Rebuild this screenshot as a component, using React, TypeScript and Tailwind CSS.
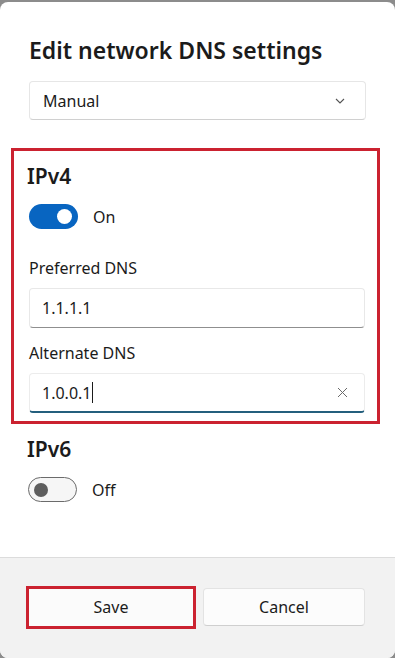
import React from "react";

const font = { fontFamily: '"Noto Sans", "Open Sans", sans-serif' };

function ToggleOn() {
  return (
    <div className="w-[49px] h-[25px] rounded-full bg-[#0865c1] flex items-center justify-end pr-[6px]">
      <div className="w-[15px] h-[15px] rounded-full bg-white" />
    </div>
  );
}

function ToggleOff() {
  return (
    <div className="w-[49px] h-[25px] rounded-full border border-[#6b6b6b] bg-[#f6f6f6] flex items-center pl-[5px]">
      <div className="w-[14px] h-[14px] rounded-full bg-[#5e5e5e]" />
    </div>
  );
}

export default function App() {
  return (
    <div className="w-[395px] h-[658px] bg-[#8c8c8c] pt-[2px] overflow-hidden" style={font}>
      <div className="h-[656px] bg-white rounded-[8px] flex flex-col overflow-hidden">
        <div className="flex-1 flex flex-col">
          <div className="pt-[34px] pl-[29px] text-[23px] leading-[28px] font-semibold text-[#1b1b1b]">
            Edit network DNS settings
          </div>
          <div className="mt-[17px] mx-[29px] w-[337px] h-[39px] rounded-[4px] border border-[#e6e6e6] border-b-[#d0d0d0] bg-white flex items-center justify-between pl-[13px] pr-[20px] text-[16px] text-[#1b1b1b]">
            <span>Manual</span>
            <svg width="10" height="6" viewBox="0 0 10 6" fill="none">
              <polyline points="1,1 5,5 9,1" stroke="#555" strokeWidth="1.1" />
            </svg>
          </div>

          <div className="mt-[28px] ml-[11px] w-[369px] border-[3px] border-[#cb2230] pl-[15px] pr-[12px] pb-[8px]">
            <div className="pt-[11px] text-[21px] leading-[28px] font-semibold text-[#1b1b1b] -ml-[2px]">IPv4</div>
            <div className="mt-[14px] h-[25px] flex items-center gap-[15px]">
              <ToggleOn />
              <span className="text-[16px] text-[#1b1b1b]">On</span>
            </div>
            <div className="mt-[29px] text-[16px] leading-[20px] text-[#1b1b1b]">Preferred DNS</div>
            <div className="mt-[10px] h-[40px] rounded-[4px] border border-[#e8e8e8] border-b-[#8f8f8f] bg-white flex items-center pl-[12px] text-[16px] text-[#1b1b1b]">
              1.1.1.1
            </div>
            <div className="mt-[15px] text-[16px] leading-[20px] text-[#1b1b1b]">Alternate DNS</div>
            <div className="mt-[10px] h-[40px] rounded-[4px] border border-[#ececec] border-b-2 border-b-[#245f7d] bg-white flex items-center justify-between pl-[12px] pr-[16px] text-[16px] text-[#1b1b1b]">
              <span className="flex items-center">
                1.0.0.1
                <span className="inline-block w-[1px] h-[21px] bg-[#1b1b1b] ml-[1px]" />
              </span>
              <svg width="11" height="11" viewBox="0 0 11 11" fill="none">
                <path d="M1 1L10 10M10 1L1 10" stroke="#6a6a6a" strokeWidth="1" />
              </svg>
            </div>
          </div>

          <div className="mt-[11px] pl-[27px] text-[21px] leading-[28px] font-semibold text-[#1b1b1b]">IPv6</div>
          <div className="mt-[14px] ml-[28px] h-[25px] flex items-center gap-[15px]">
            <ToggleOff />
            <span className="text-[16px] text-[#1b1b1b]">Off</span>
          </div>
        </div>

        <div className="h-[101px] border-t border-[#dcdcdc] bg-[#f2f2f2] flex items-center gap-[7px] pl-[26px] pr-[30px] pb-[2px]">
          <div className="w-[170px] h-[43px] border-[3px] border-[#cb2230] bg-[#fbfbfb] flex items-center justify-center text-[16px] text-[#1b1b1b]">
            Save
          </div>
          <div className="flex-1 h-[38px] rounded-[4px] border border-[#e3e3e3] border-b-[#cfcfcf] bg-[#fcfcfc] flex items-center justify-center text-[16px] text-[#1b1b1b]">
            Cancel
          </div>
        </div>
      </div>
    </div>
  );
}
